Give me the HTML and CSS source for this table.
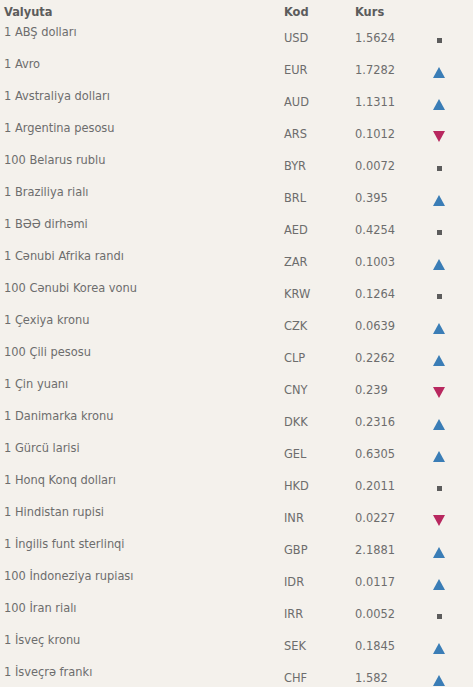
FILE: index.html
```html
<!DOCTYPE html>
<html lang="az">
<head>
<meta charset="utf-8">
<title>Valyuta</title>
<link rel="stylesheet" href="styles.css">
</head>
<body>
<div class="rates">
  <div class="row head">
    <div class="name">Valyuta</div>
    <div class="code">Kod</div>
    <div class="rate">Kurs</div>
    <div class="ico"></div>
  </div>
  <div class="row"><div class="name">1 ABŞ dolları</div><div class="code">USD</div><div class="rate">1.5624</div><div class="ico"><span class="sq"></span></div></div>
  <div class="row"><div class="name">1 Avro</div><div class="code">EUR</div><div class="rate">1.7282</div><div class="ico"><span class="up"></span></div></div>
  <div class="row"><div class="name">1 Avstraliya dolları</div><div class="code">AUD</div><div class="rate">1.1311</div><div class="ico"><span class="up"></span></div></div>
  <div class="row"><div class="name">1 Argentina pesosu</div><div class="code">ARS</div><div class="rate">0.1012</div><div class="ico"><span class="down"></span></div></div>
  <div class="row"><div class="name">100 Belarus rublu</div><div class="code">BYR</div><div class="rate">0.0072</div><div class="ico"><span class="sq"></span></div></div>
  <div class="row"><div class="name">1 Braziliya rialı</div><div class="code">BRL</div><div class="rate">0.395</div><div class="ico"><span class="up"></span></div></div>
  <div class="row"><div class="name">1 BƏƏ dirhəmi</div><div class="code">AED</div><div class="rate">0.4254</div><div class="ico"><span class="sq"></span></div></div>
  <div class="row"><div class="name">1 Cənubi Afrika randı</div><div class="code">ZAR</div><div class="rate">0.1003</div><div class="ico"><span class="up"></span></div></div>
  <div class="row"><div class="name">100 Cənubi Korea vonu</div><div class="code">KRW</div><div class="rate">0.1264</div><div class="ico"><span class="sq"></span></div></div>
  <div class="row"><div class="name">1 Çexiya kronu</div><div class="code">CZK</div><div class="rate">0.0639</div><div class="ico"><span class="up"></span></div></div>
  <div class="row"><div class="name">100 Çili pesosu</div><div class="code">CLP</div><div class="rate">0.2262</div><div class="ico"><span class="up"></span></div></div>
  <div class="row"><div class="name">1 Çin yuanı</div><div class="code">CNY</div><div class="rate">0.239</div><div class="ico"><span class="down"></span></div></div>
  <div class="row"><div class="name">1 Danimarka kronu</div><div class="code">DKK</div><div class="rate">0.2316</div><div class="ico"><span class="up"></span></div></div>
  <div class="row"><div class="name">1 Gürcü larisi</div><div class="code">GEL</div><div class="rate">0.6305</div><div class="ico"><span class="up"></span></div></div>
  <div class="row"><div class="name">1 Honq Konq dolları</div><div class="code">HKD</div><div class="rate">0.2011</div><div class="ico"><span class="sq"></span></div></div>
  <div class="row"><div class="name">1 Hindistan rupisi</div><div class="code">INR</div><div class="rate">0.0227</div><div class="ico"><span class="down"></span></div></div>
  <div class="row"><div class="name">1 İngilis funt sterlinqi</div><div class="code">GBP</div><div class="rate">2.1881</div><div class="ico"><span class="up"></span></div></div>
  <div class="row"><div class="name">100 İndoneziya rupiası</div><div class="code">IDR</div><div class="rate">0.0117</div><div class="ico"><span class="up"></span></div></div>
  <div class="row"><div class="name">100 İran rialı</div><div class="code">IRR</div><div class="rate">0.0052</div><div class="ico"><span class="sq"></span></div></div>
  <div class="row"><div class="name">1 İsveç kronu</div><div class="code">SEK</div><div class="rate">0.1845</div><div class="ico"><span class="up"></span></div></div>
  <div class="row"><div class="name">1 İsveçrə frankı</div><div class="code">CHF</div><div class="rate">1.582</div><div class="ico"><span class="up"></span></div></div>
</div>
</body>
</html>
```

FILE: styles.css
```css
html, body {
  margin: 0;
  padding: 0;
  background: #f4f1ec;
}
body {
  font-family: "DejaVu Sans Condensed", "DejaVu Sans", Verdana, sans-serif;
  font-size: 12.7px;
  line-height: 15px;
  color: #6d6d6d;
}
.rates {
  padding-left: 4px;
  padding-top: 1px;
}
.row {
  display: grid;
  grid-template-columns: 280px 71px 78px 13px;
  height: 32px;
}
.row.head {
  height: 20px;
  padding-top: 3px;
  font-weight: bold;
  color: #5c5c5c;
}
.row.head .code,
.row.head .rate {
  padding-top: 0;
}
.name {
  white-space: nowrap;
}
.code, .rate {
  padding-top: 5.5px;
}
.ico {
  position: relative;
  height: 32px;
}
.sq {
  position: absolute;
  left: 4px;
  top: 14px;
  width: 5px;
  height: 5px;
  background: #5c5c5c;
}
.up, .down {
  position: absolute;
  left: 0;
  top: 11px;
  width: 0;
  height: 0;
  border-left: 6.5px solid transparent;
  border-right: 6.5px solid transparent;
}
.up {
  border-bottom: 11px solid #3a7db6;
}
.down {
  border-top: 11px solid #b8285f;
}
```
